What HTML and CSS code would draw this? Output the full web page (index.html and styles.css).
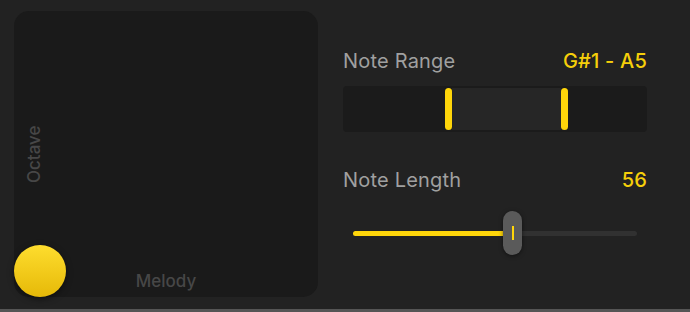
FILE: index.html
```html
<!DOCTYPE html>
<html lang="en">
<head>
  <meta charset="UTF-8" />
  <title>Arpeggiator Pad</title>
  <link rel="stylesheet" href="styles.css">
</head>
<body>

  <div class="app">
    <div class="pad">
      <span class="axis axis-y">Octave</span>
      <span class="axis axis-x">Melody</span>
      <div class="puck"></div>
    </div>

    <div class="controls">
      <div class="row">
        <span class="label">Note Range</span>
        <span class="value">G#1 - A5</span>
      </div>
      <div class="range">
        <div class="handle"></div>
        <div class="range-mid"></div>
        <div class="handle"></div>
      </div>

      <div class="row row-length">
        <span class="label">Note Length</span>
        <span class="value">56</span>
      </div>
      <div class="slider">
        <div class="track">
          <div class="fill" style="width: 157px;"></div>
        </div>
        <div class="thumb" style="left: 150px;"><i></i></div>
      </div>
    </div>
  </div>

</body>
</html>
```

FILE: styles.css
```css
html, body {
  margin: 0;
  height: 100%;
  background-color: #222222;
  font-family: Inter, "Liberation Sans", sans-serif;
}
.app {
  display: flex;
  gap: 25px;
  height: 312px;
  box-sizing: border-box;
  padding: 11px 0 0 14px;
  border-bottom: 3px solid #555555;
}
.pad {
  position: relative;
  width: 304px;
  height: 286px;
  background-color: #1a1a1a;
  border-radius: 15px;
}
.axis {
  position: absolute;
  color: #474747;
  font-size: 17px;
  font-weight: 500;
}
.axis-y {
  left: 10px;
  top: 0;
  bottom: 0;
  writing-mode: vertical-rl;
  transform: rotate(180deg);
  text-align: center;
  line-height: 20px;
}
.axis-x {
  left: 0;
  right: 0;
  bottom: 6px;
  text-align: center;
  line-height: 20px;
}
.puck {
  position: absolute;
  left: 0;
  bottom: 0;
  width: 52px;
  height: 52px;
  border-radius: 50%;
  background: linear-gradient(#fedd2e, #e6b908);
  box-shadow: 0 2px 6px rgba(0,0,0,0.5);
}
.controls {
  width: 304px;
  padding-top: 38px;
}
.row {
  display: flex;
  justify-content: space-between;
  font-size: 20px;
  line-height: 24px;
  font-weight: 400;
  letter-spacing: 0.2px;
}
.label {
  color: #a0a0a0;
}
.value {
  color: #f6cf0a;
  font-weight: 500;
}
.range {
  display: flex;
  align-items: center;
  height: 46px;
  margin-top: 13px;
  padding: 0 79px 0 102px;
  background-color: #1b1b1b;
  border-radius: 4px;
}
.handle {
  width: 7px;
  height: 42px;
  border-radius: 4px;
  background-color: #ffd60a;
}
.range-mid {
  flex: 1;
  height: 42px;
  background-color: #262626;
}
.row-length {
  margin-top: 36px;
}
.slider {
  position: relative;
  height: 44px;
  margin: 19px 10px 0 10px;
  display: flex;
  align-items: center;
}
.track {
  flex: 1;
  height: 5px;
  border-radius: 3px;
  background-color: #313131;
}
.fill {
  height: 100%;
  border-radius: 3px;
  background-color: #ffd60a;
}
.thumb {
  position: absolute;
  top: 0;
  width: 19px;
  height: 44px;
  border-radius: 10px;
  background-color: #5a5a5a;
  box-shadow: 0 1px 4px rgba(0,0,0,0.5);
  display: flex;
  justify-content: center;
  align-items: center;
}
.thumb i {
  width: 2px;
  height: 14px;
  background-color: #ffd60a;
}
```
